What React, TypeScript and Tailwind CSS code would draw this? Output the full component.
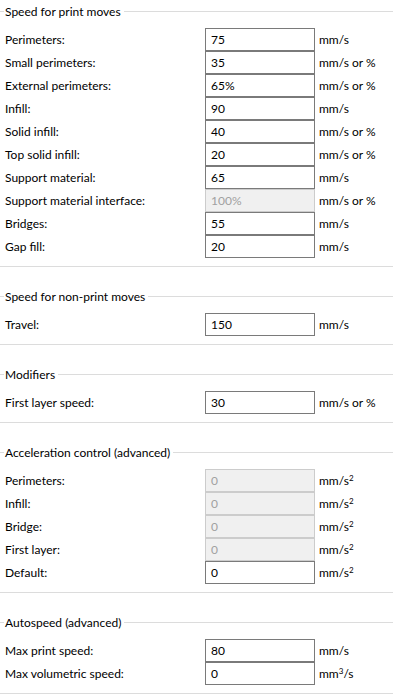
import React from 'react'

type Row = { label: string; value: string; unit: React.ReactNode; disabled?: boolean }
type Group = { title: string; rows: Row[] }

const s2 = <>mm/s<span className="text-[8px] align-top relative -top-[1px]">2</span></>
const s3 = <>mm<span className="text-[8px] align-top relative -top-[1px]">3</span>/s</>

const groups: Group[] = [
  {
    title: 'Speed for print moves',
    rows: [
      { label: 'Perimeters:', value: '75', unit: 'mm/s' },
      { label: 'Small perimeters:', value: '35', unit: 'mm/s or %' },
      { label: 'External perimeters:', value: '65%', unit: 'mm/s or %' },
      { label: 'Infill:', value: '90', unit: 'mm/s' },
      { label: 'Solid infill:', value: '40', unit: 'mm/s or %' },
      { label: 'Top solid infill:', value: '20', unit: 'mm/s or %' },
      { label: 'Support material:', value: '65', unit: 'mm/s' },
      { label: 'Support material interface:', value: '100%', unit: 'mm/s or %', disabled: true },
      { label: 'Bridges:', value: '55', unit: 'mm/s' },
      { label: 'Gap fill:', value: '20', unit: 'mm/s' },
    ],
  },
  {
    title: 'Speed for non-print moves',
    rows: [{ label: 'Travel:', value: '150', unit: 'mm/s' }],
  },
  {
    title: 'Modifiers',
    rows: [{ label: 'First layer speed:', value: '30', unit: 'mm/s or %' }],
  },
  {
    title: 'Acceleration control (advanced)',
    rows: [
      { label: 'Perimeters:', value: '0', unit: s2, disabled: true },
      { label: 'Infill:', value: '0', unit: s2, disabled: true },
      { label: 'Bridge:', value: '0', unit: s2, disabled: true },
      { label: 'First layer:', value: '0', unit: s2, disabled: true },
      { label: 'Default:', value: '0', unit: s2 },
    ],
  },
  {
    title: 'Autospeed (advanced)',
    rows: [
      { label: 'Max print speed:', value: '80', unit: 'mm/s' },
      { label: 'Max volumetric speed:', value: '0', unit: s3 },
    ],
  },
]

function FieldRow({ row }: { row: Row }) {
  return (
    <div className="flex h-[23px] items-center">
      <div className="w-[205px] pl-[5px]">{row.label}</div>
      <div
        className={
          row.disabled
            ? 'w-[110px] h-[23px] border border-[#cccccc] bg-[#f0f0f0] text-[#a0a0a0] pl-[5px] flex items-center'
            : 'w-[110px] h-[23px] border border-[#7a7a7a] bg-white text-black pl-[5px] flex items-center'
        }
      >
        {row.value}
      </div>
      <div className="pl-[4px]">{row.unit}</div>
    </div>
  )
}

function GroupBox({ group }: { group: Group }) {
  return (
    <div className="mb-[18px]">
      <div className="flex h-[23px] items-center">
        <div className="w-[4px] h-px bg-[#dcdcdc]" />
        <span className="pl-[1px] pr-[3px]">{group.title}</span>
        <div className="flex-1 h-px bg-[#dcdcdc]" />
      </div>
      <div className="pt-[5px]">
        {group.rows.map((r, i) => (
          <FieldRow key={i} row={r} />
        ))}
      </div>
      <div className="mt-[8px] h-px bg-[#dcdcdc]" />
    </div>
  )
}

export default function App() {
  return (
    <div
      className="w-[393px] h-[699px] overflow-hidden bg-white text-black text-[12px] leading-none"
      style={{ fontFamily: 'Lato, "Noto Sans", sans-serif' }}
    >
      {groups.map((g, i) => (
        <GroupBox key={i} group={g} />
      ))}
    </div>
  )
}
